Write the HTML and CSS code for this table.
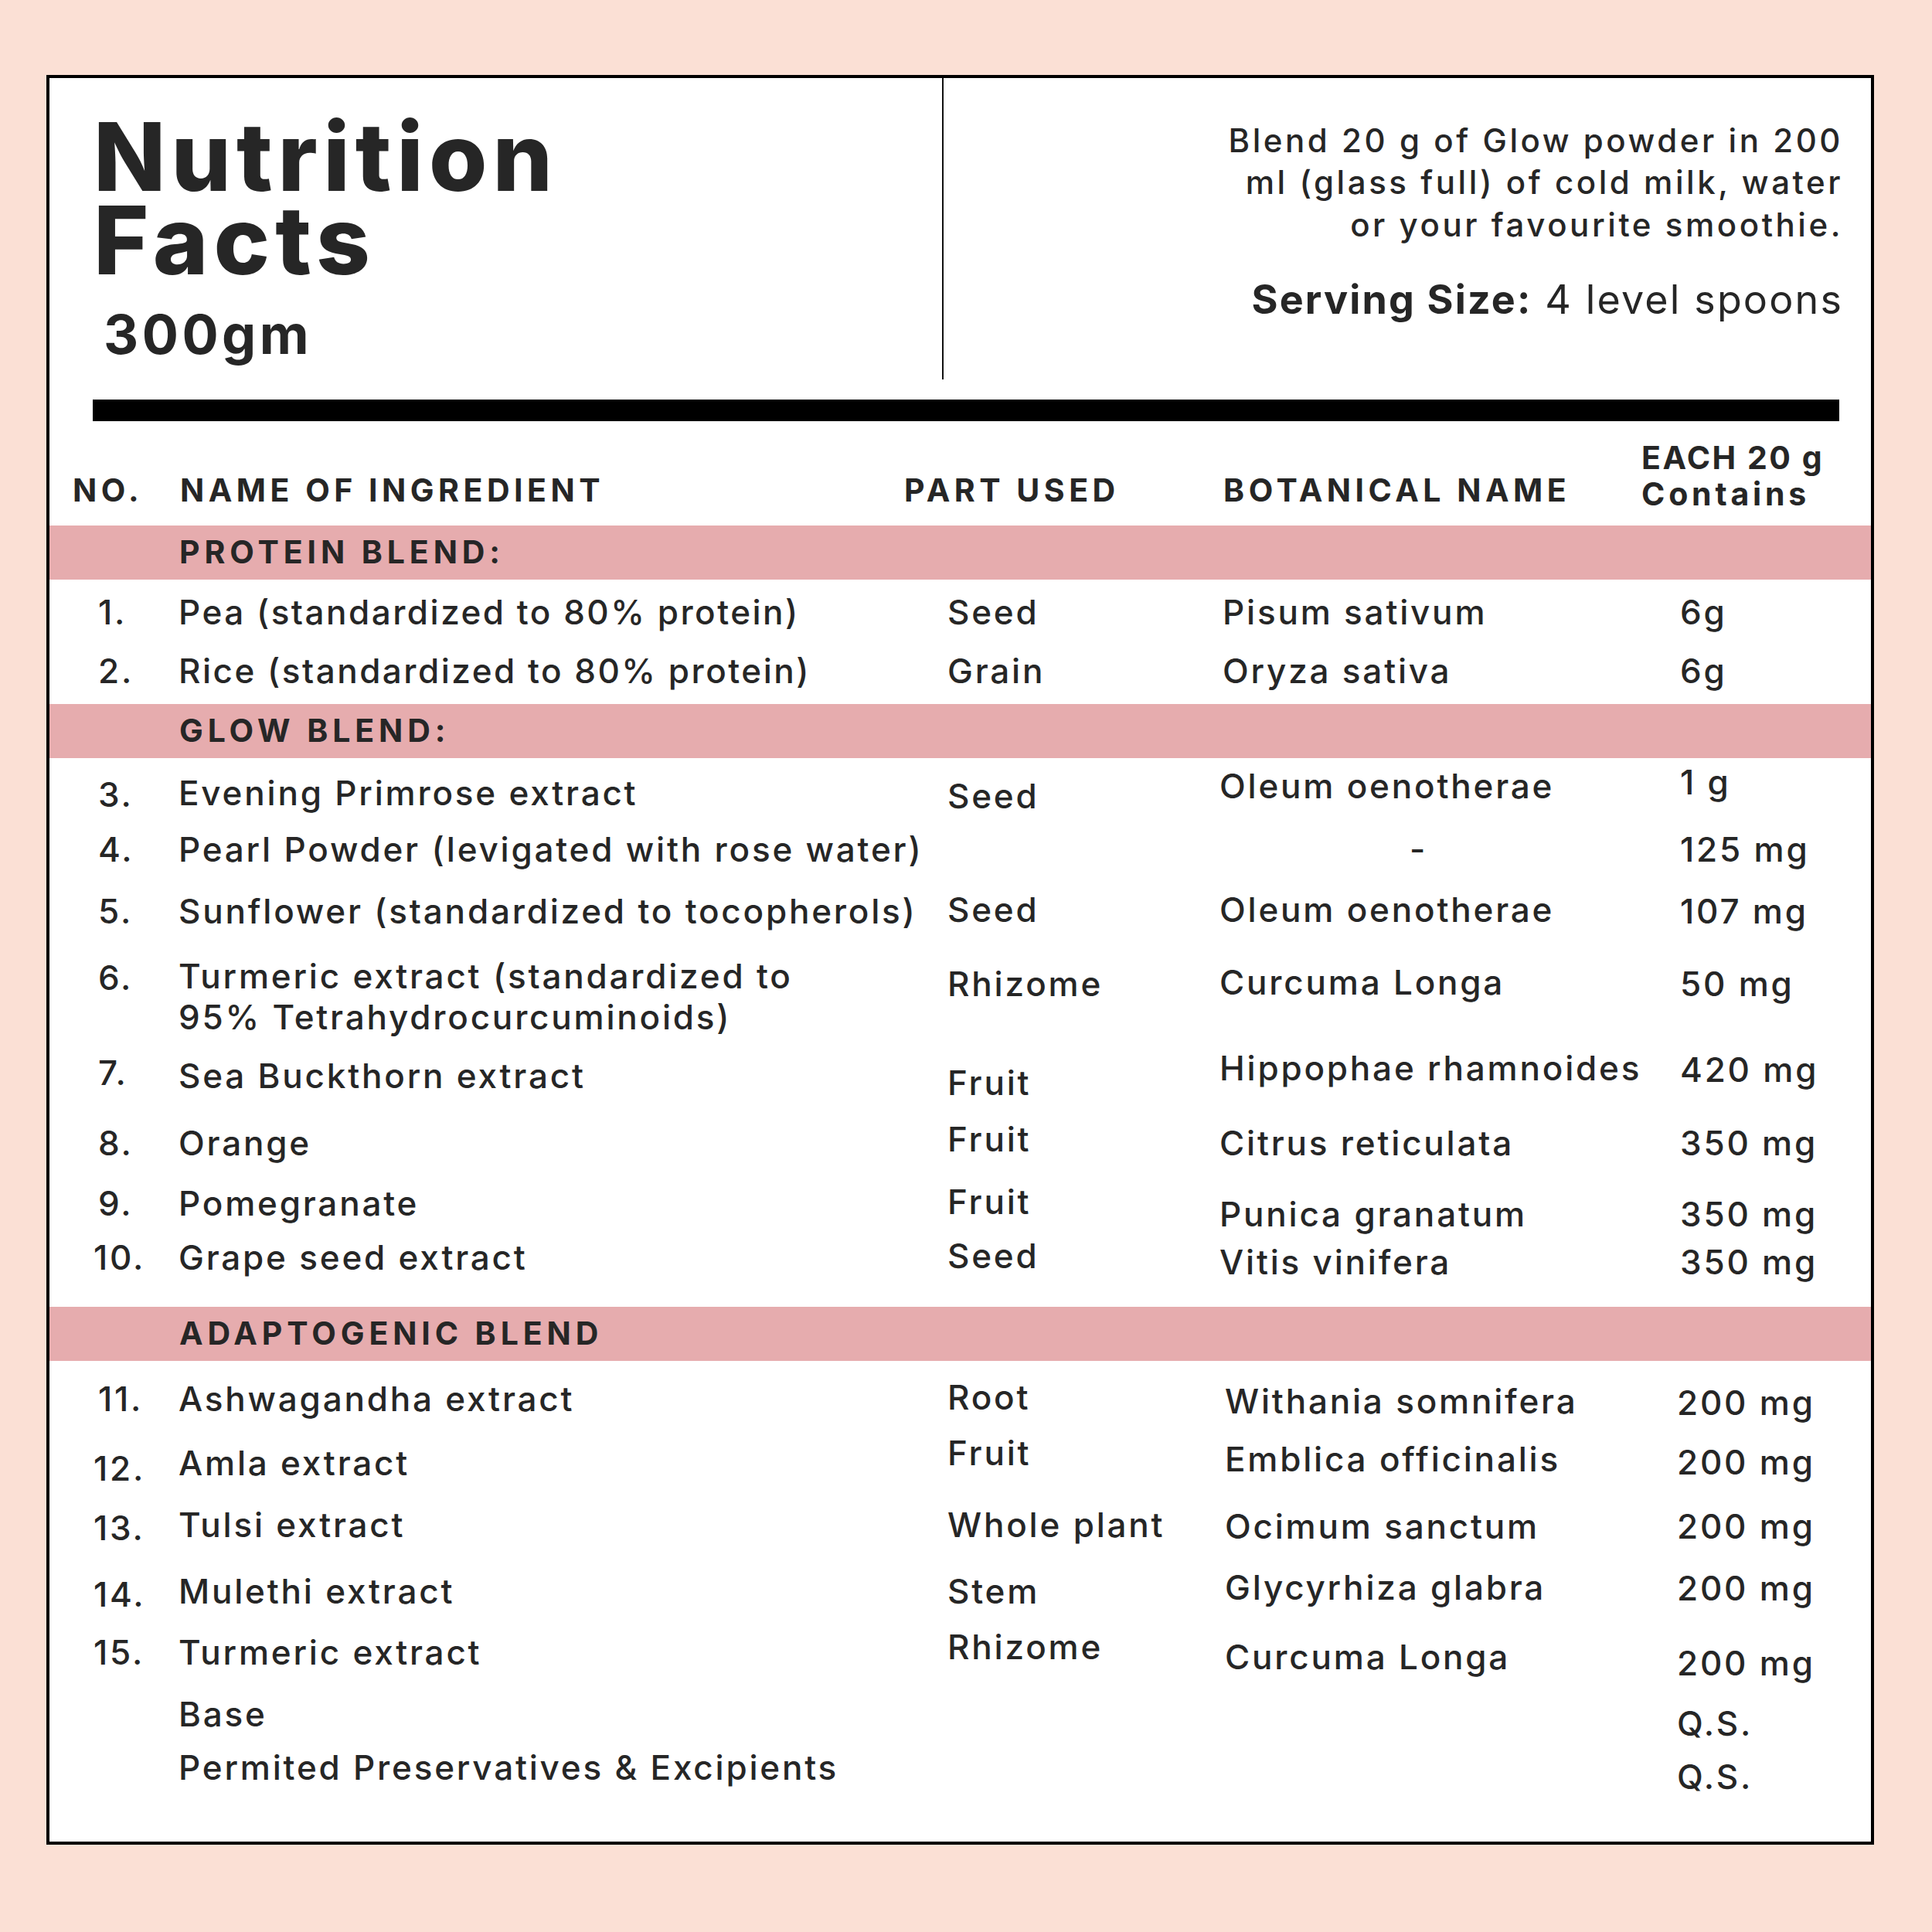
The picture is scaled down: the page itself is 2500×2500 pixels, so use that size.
FILE: index.html
```html
<!DOCTYPE html>
<html lang="en">
<head>
<meta charset="utf-8">
<title>Nutrition Facts</title>
<link rel="stylesheet" href="styles.css">
</head>
<body>
<main class="label">
  <header class="top">
    <div class="title-block">
      <h1 class="title">Nutrition<br>Facts</h1>
      <p class="weight">300gm</p>
    </div>
    <div class="divider"></div>
    <div class="usage">
      <p class="blend">Blend 20 g of Glow powder in 200<br>ml (glass full) of cold milk, water<br>or your favourite smoothie.</p>
      <p class="serving"><b>Serving Size:</b> 4 level spoons</p>
    </div>
  </header>
  <div class="rule"></div>

  <div class="thead">
    <div class="th">NO.</div>
    <div class="th">NAME OF INGREDIENT</div>
    <div class="th">PART USED</div>
    <div class="th">BOTANICAL NAME</div>
    <div class="th two"><span class="each">EACH 20 g</span><br><span class="contains">Contains</span></div>
  </div>

  <div class="band">PROTEIN BLEND:</div>
  <div class="rows s1">
    <div class="no">1.</div><div class="nm">Pea (standardized to 80% protein)</div><div class="pt">Seed</div><div class="bt">Pisum sativum</div><div class="am">6g</div>
    <div class="no">2.</div><div class="nm">Rice (standardized to 80% protein)</div><div class="pt">Grain</div><div class="bt">Oryza sativa</div><div class="am">6g</div>
  </div>

  <div class="band">GLOW BLEND:</div>
  <div class="rows s2">
    <div class="no d2">3.</div><div class="nm">Evening Primrose extract</div><div class="pt d4">Seed</div><div class="bt u9">Oleum oenotherae</div><div class="am u14">1 g</div>
    <div class="no">4.</div><div class="nm">Pearl Powder (levigated with rose water)</div><div class="pt"></div><div class="bt dash">-</div><div class="am">125 mg</div>
    <div class="no">5.</div><div class="nm">Sunflower (standardized to tocopherols)</div><div class="pt u2">Seed</div><div class="bt u2">Oleum oenotherae</div><div class="am">107 mg</div>
    <div class="no d2">6.</div><div class="nm">Turmeric extract (standardized to<br>95% Tetrahydrocurcuminoids)</div><div class="pt d10">Rhizome</div><div class="bt d8">Curcuma Longa</div><div class="am d10">50 mg</div>
    <div class="no">7.</div><div class="nm d4">Sea Buckthorn extract</div><div class="pt d13">Fruit</div><div class="bt u6">Hippophae rhamnoides</div><div class="am u4">420 mg</div>
    <div class="no">8.</div><div class="nm">Orange</div><div class="pt u5">Fruit</div><div class="bt">Citrus reticulata</div><div class="am">350 mg</div>
    <div class="no">9.</div><div class="nm">Pomegranate</div><div class="pt u2">Fruit</div><div class="bt d14">Punica granatum</div><div class="am d14">350 mg</div>
    <div class="no nn">10.</div><div class="nm">Grape seed extract</div><div class="pt u2">Seed</div><div class="bt d6">Vitis vinifera</div><div class="am d6">350 mg</div>
  </div>

  <div class="band">ADAPTOGENIC BLEND</div>
  <div class="rows s3">
    <div class="no">11.</div><div class="nm">Ashwagandha extract</div><div class="pt u2">Root</div><div class="bt d3">Withania somnifera</div><div class="am d5">200 mg</div>
    <div class="no nn d5">12.</div><div class="nm u2">Amla extract</div><div class="pt u15">Fruit</div><div class="bt u7">Emblica officinalis</div><div class="am u3">200 mg</div>
    <div class="no nn d4">13.</div><div class="nm">Tulsi extract</div><div class="pt">Whole plant</div><div class="bt d2">Ocimum sanctum</div><div class="am d2">200 mg</div>
    <div class="no nn d4">14.</div><div class="nm">Mulethi extract</div><div class="pt">Stem</div><div class="bt u5">Glycyrhiza glabra</div><div class="am u4">200 mg</div>
    <div class="no nn">15.</div><div class="nm">Turmeric extract</div><div class="pt u7">Rhizome</div><div class="bt d6">Curcuma Longa</div><div class="am d14">200 mg</div>
    <div class="no"></div><div class="nm">Base</div><div class="pt"></div><div class="bt"></div><div class="am d12">Q.S.</div>
    <div class="no"></div><div class="nm">Permited Preservatives &amp; Excipients</div><div class="pt"></div><div class="bt"></div><div class="am d12">Q.S.</div>
  </div>
</main>
</body>
</html>
```

FILE: styles.css
```css
html, body {
  margin: 0;
  padding: 0;
  background: #fbe0d5;
}

body {
  width: 2500px;
  height: 2500px;
  overflow: hidden;
  font-family: Inter, "Liberation Sans", sans-serif;
  color: #262626;
}

.label {
  box-sizing: border-box;
  width: 2365px;
  height: 2290px;
  margin: 97px 0 0 60px;
  border: 4px solid #000;
  background: #fff;
}

/* ---------- top block ---------- */
.top {
  display: flex;
  height: 390px;
}

.title-block {
  width: 1155px;
  box-sizing: border-box;
  padding: 48px 0 0 57px;
}

.title {
  margin: 0;
  font-size: 122px;
  line-height: 108px;
  font-weight: 800;
  letter-spacing: 7px;
}

.weight {
  margin: 28px 0 0 13px;
  font-size: 70px;
  line-height: 80px;
  font-weight: 700;
  letter-spacing: 4.5px;
}

.divider {
  width: 2px;
  background: #111;
}

.usage {
  flex: 1;
  text-align: right;
  padding: 54px 36px 0 0;
  white-space: nowrap;
}

.blend {
  margin: 0;
  font-size: 42px;
  line-height: 54.4px;
  font-weight: 500;
  letter-spacing: 3.55px;
}

.serving {
  margin: 40px 0 0 0;
  font-size: 52px;
  line-height: 60px;
  font-weight: 400;
  letter-spacing: 2.15px;
}

.serving b {
  font-weight: 700;
}

.rule {
  width: 2260px;
  height: 28px;
  margin: 26px 0 0 56px;
  background: #000;
}

/* ---------- table header ---------- */
.thead {
  display: grid;
  grid-template-columns: 139px 937px 413px 541px 1fr;
  align-items: start;
  height: 135px;
  padding-left: 30px;
  font-size: 41px;
  line-height: 47px;
  font-weight: 700;
  letter-spacing: 5.5px;
  white-space: nowrap;
}

.th {
  margin-top: 66px;
}

.th.two {
  margin-top: 24px;
}

.each {
  letter-spacing: 2.5px;
}

.contains {
  letter-spacing: 4.8px;
}

/* ---------- blend bands ---------- */
.band {
  box-sizing: border-box;
  height: 70px;
  padding: 11px 0 0 168px;
  background: #e6acae;
  font-size: 41px;
  line-height: 47px;
  font-weight: 700;
  letter-spacing: 5.9px;
}

/* ---------- ingredient rows ---------- */
.rows {
  display: grid;
  grid-template-columns: 104px 995px 352px 596px 1fr;
  align-items: start;
  padding-left: 63px;
  font-size: 44px;
  line-height: 53px;
  font-weight: 500;
  letter-spacing: 2.8px;
  white-space: nowrap;
}

.s1 {
  padding-top: 16px;
  grid-template-rows: 76px 69px;
}

.s1 .nm {
  letter-spacing: 2.5px;
}

.s1 .bt {
  padding-left: 4px;
}

.s2 {
  padding-top: 19px;
  grid-template-rows: 73px 80px 84px 125px 91px 77.5px 70.5px 90px;
}

.s3 {
  padding-top: 23px;
  grid-template-rows: 85px 78px 85.5px 79.5px 80px 69px 53px;
}

.s3 .bt {
  padding-left: 7px;
}

.s3 .am {
  margin-left: -4px;
}

.nn {
  margin-left: -6px;
}

.dash {
  padding-left: 246px;
}

/* small vertical nudges of individual cells */
.d2 { margin-top: 2px; }
.d3 { margin-top: 3px; }
.d4 { margin-top: 4px; }
.d5 { margin-top: 5px; }
.d6 { margin-top: 6px; }
.d8 { margin-top: 8px; }
.d10 { margin-top: 10px; }
.d12 { margin-top: 12px; }
.d13 { margin-top: 13px; }
.d14 { margin-top: 14px; }
.u2 { margin-top: -2px; }
.u3 { margin-top: -3px; }
.u4 { margin-top: -4px; }
.u5 { margin-top: -5px; }
.u6 { margin-top: -6px; }
.u7 { margin-top: -7px; }
.u9 { margin-top: -9px; }
.u14 { margin-top: -14px; }
.u15 { margin-top: -15px; }
```
